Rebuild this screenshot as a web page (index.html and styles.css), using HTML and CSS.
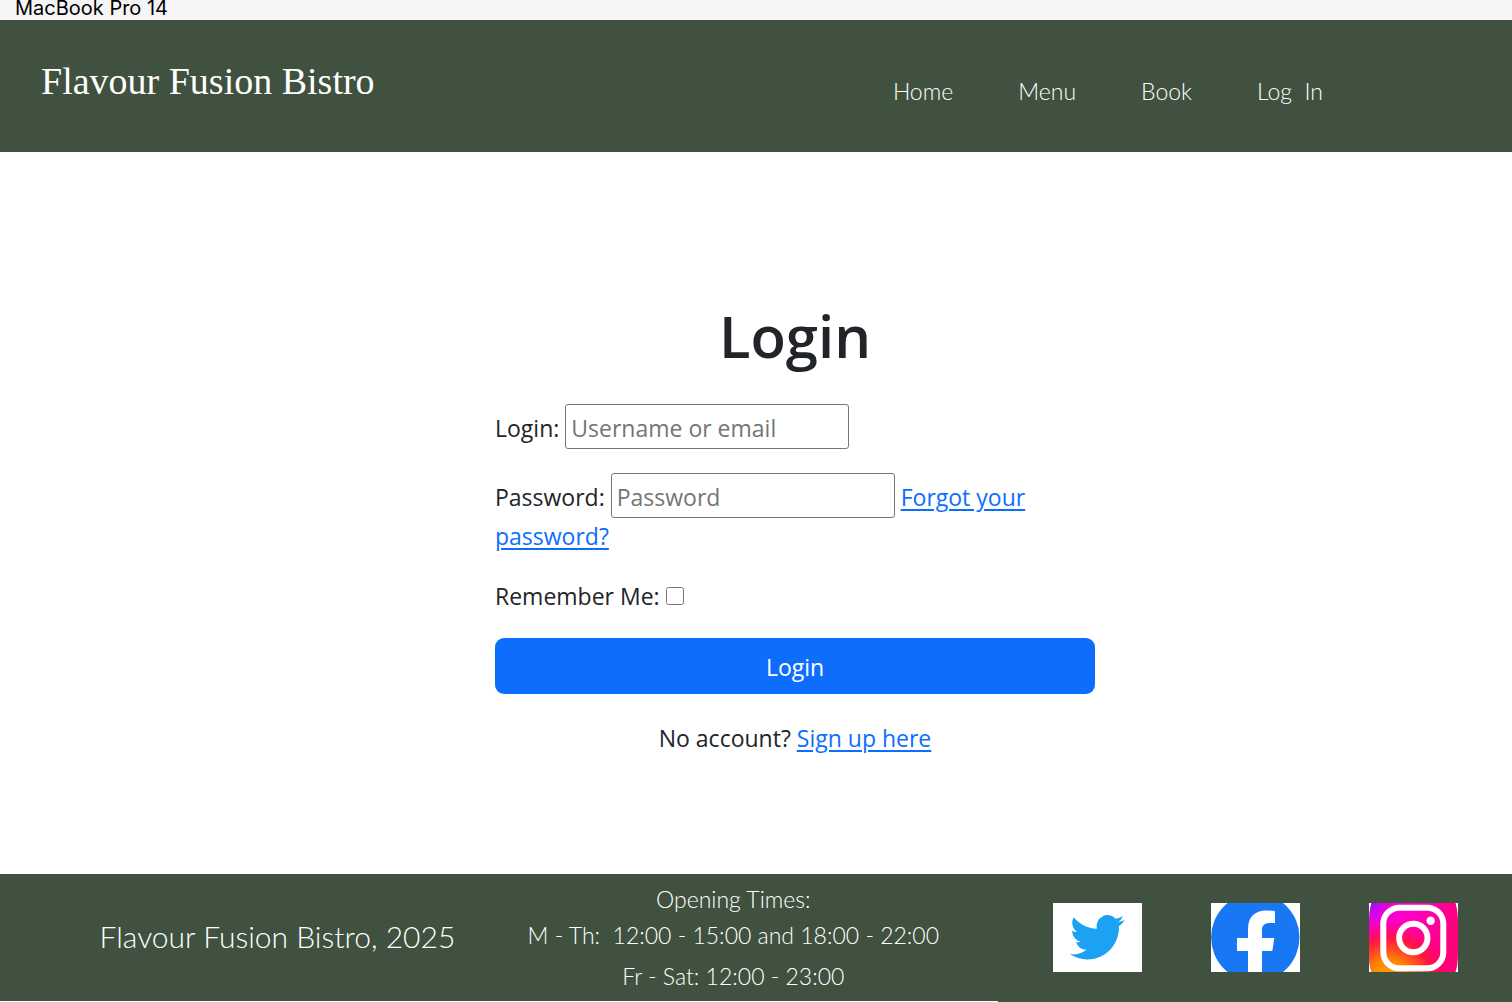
FILE: index.html
```html
<!DOCTYPE html>
<html lang="en">
<head>
<meta charset="utf-8">
<meta name="viewport" content="width=device-width, initial-scale=1">
<title>Login - Flavour Fusion Bistro</title>
<link rel="stylesheet" href="styles.css">
</head>
<body>
<div class="frame-label">MacBook Pro 14</div>
<header class="site-header">
  <div class="brand">Flavour Fusion Bistro</div>
  <nav class="site-nav">
    <a href="#">Home</a>
    <a href="#">Menu</a>
    <a href="#">Book</a>
    <a href="#">Log&nbsp; In</a>
  </nav>
</header>
<main class="content">
  <form class="login-form">
    <h1>Login</h1>
    <p><label for="login">Login:</label> <input class="field" type="text" id="login" placeholder="Username or email"></p>
    <p><label for="password">Password:</label> <input class="field" type="password" id="password" placeholder="Password"> <a href="#">Forgot your password?</a></p>
    <p><label for="remember">Remember Me:</label> <input class="tick" type="checkbox" id="remember"></p>
    <button type="submit">Login</button>
    <p class="signup">No account? <a href="#">Sign up here</a></p>
  </form>
</main>
<footer class="site-footer">
  <div class="copyright">Flavour Fusion Bistro, 2025</div>
  <div class="hours">
    <div>Opening Times:</div>
    <div>M - Th:&nbsp; 12:00 - 15:00 and 18:00 - 22:00</div>
    <div class="weekend">Fr - Sat: 12:00 - 23:00</div>
  </div>
  <div class="social">
    <a href="#" aria-label="Twitter">
      <svg viewBox="0 0 89 69"><rect width="89" height="69" fill="#fff"/><path transform="translate(17 7) scale(2.27)" fill="#1da1f2" d="M23.953 4.57a10 10 0 01-2.825.775 4.958 4.958 0 002.163-2.723c-.951.555-2.005.959-3.127 1.184a4.92 4.92 0 00-8.384 4.482C7.69 8.095 4.067 6.13 1.64 3.162a4.822 4.822 0 00-.666 2.475c0 1.71.87 3.213 2.188 4.096a4.904 4.904 0 01-2.228-.616v.06a4.923 4.923 0 003.946 4.827 4.996 4.996 0 01-2.212.085 4.936 4.936 0 004.604 3.417 9.867 9.867 0 01-6.102 2.105c-.39 0-.779-.023-1.17-.067a13.995 13.995 0 007.557 2.209c9.053 0 13.998-7.496 13.998-13.985 0-.21 0-.42-.015-.63A9.935 9.935 0 0024 4.59z"/></svg>
    </a>
    <a href="#" aria-label="Facebook">
      <svg viewBox="0 0 89 69"><rect width="89" height="69" fill="#fff"/><circle cx="44.3" cy="34.5" r="44.2" fill="#1877f2"/><path fill="#fff" d="M37 69V48H26V35h11V26C37 14 44 7.500 55 7.500q5 0 9 .7V20h-5.500C53 20 51 23 51 27v8h12.300l-2 13H51v21z"/></svg>
    </a>
    <a href="#" aria-label="Instagram">
      <svg viewBox="0 0 89 69">
        <defs>
          <linearGradient id="ig-base" x1="0" y1="0" x2="1" y2="0.300"><stop offset="0" stop-color="#e800e0"/><stop offset=".45" stop-color="#ff00c8"/><stop offset="1" stop-color="#ff0078"/></linearGradient>
          <radialGradient id="ig-warm" gradientUnits="userSpaceOnUse" cx="20" cy="80" r="66"><stop offset="0" stop-color="#ffb000"/><stop offset=".35" stop-color="#ff8500"/><stop offset=".68" stop-color="#ff1638" stop-opacity=".9"/><stop offset="1" stop-color="#ff0078" stop-opacity="0"/></radialGradient>
          <radialGradient id="ig-violet" gradientUnits="userSpaceOnUse" cx="0" cy="0" r="26"><stop offset="0" stop-color="#8a10ff"/><stop offset="1" stop-color="#e800e0" stop-opacity="0"/></radialGradient>
        </defs>
        <rect width="89" height="69" fill="#fff"/>
        <path fill="url(#ig-base)" d="M2.500 0h84Q89 8 89 20v30q0 12-2.500 19h-84Q0 62 0 50V20Q0 8 2.500 0z"/>
        <path fill="url(#ig-warm)" d="M2.500 0h84Q89 8 89 20v30q0 12-2.500 19h-84Q0 62 0 50V20Q0 8 2.500 0z"/>
        <path fill="url(#ig-violet)" d="M2.500 0h84Q89 8 89 20v30q0 12-2.500 19h-84Q0 62 0 50V20Q0 8 2.500 0z"/>
        <rect x="14.300" y="4.800" width="60" height="60.400" rx="16" fill="none" stroke="#fff" stroke-width="6"/>
        <circle cx="44.300" cy="35" r="14.200" fill="none" stroke="#fff" stroke-width="6"/>
        <circle cx="61.700" cy="17.700" r="4.200" fill="#fff"/>
      </svg>
    </a>
  </div>
</footer>
<div class="page-edge"></div>
</body>
</html>
```
FILE: styles.css
```css
* { box-sizing: border-box; }

body {
  margin: 0;
  min-height: 100vh;
  display: flex;
  flex-direction: column;
  background: #fff;
  color: #212529;
  font: 23px/36px "Open Sans", sans-serif;
}

.frame-label {
  height: 20px;
  padding-left: 15px;
  background: #f5f5f5;
  color: #000;
  font: 20px/16px Inter, sans-serif;
}

.site-header {
  min-height: 132px;
  display: flex;
  align-items: center;
  justify-content: space-between;
  padding: 0 12.5% 10px 41px;
  background: #40513f;
  color: #fff;
}

.brand {
  font: 38px/48px "Liberation Serif", serif;
}

.site-nav {
  display: flex;
  gap: 65px;
  padding-top: 20px;
  font: 300 23px/32px Lato, sans-serif;
}

.site-nav a {
  color: #fff;
  text-decoration: none;
}

.content {
  flex: 1;
  display: flex;
  justify-content: center;
  align-items: center;
  padding: 30px 0 0 78px;
}

.login-form {
  width: 600px;
  max-width: 100%;
}

h1 {
  margin: 0 0 32px;
  font-size: 58px;
  line-height: 72px;
  font-weight: 600;
  text-align: center;
}

p { margin: 0 0 24px; }

.login-form a { color: #0d6efd; text-underline-offset: 3px; }

.field {
  width: 284px;
  height: 45px;
  padding: 4px 5px 2px;
  border: 1px solid #767676;
  border-radius: 3px;
  background: #fff;
  color: #212529;
  font: inherit;
}

.field::placeholder { color: #757575; }

.tick {
  width: 18px;
  height: 18px;
  margin: 0;
}

button {
  display: block;
  width: 100%;
  height: 56px;
  margin-bottom: 26px;
  padding: 2px 0 0;
  border: 0;
  border-radius: 9px;
  background: #0d6efd;
  color: #fff;
  font: inherit;
}

.signup {
  margin: 0;
  text-align: center;
}

.site-footer {
  min-height: 127px;
  display: grid;
  grid-template-columns: 33% 31% 1fr;
  align-items: center;
  background: #40513f;
  color: #fff;
  font: 300 23px/36px Lato, sans-serif;
}

.copyright {
  padding: 0 0 4px 56px;
  font-size: 30px;
  text-align: center;
}

.hours { text-align: center; }

.weekend { margin-top: 5px; }

.social {
  display: flex;
  justify-content: flex-end;
  gap: 69px;
  padding-right: 54px;
}

.social svg {
  display: block;
  width: 89px;
  height: 69px;
}

.page-edge {
  height: 1px;
  background: linear-gradient(to right, #fff 66%, #40513f 66%);
}
```
